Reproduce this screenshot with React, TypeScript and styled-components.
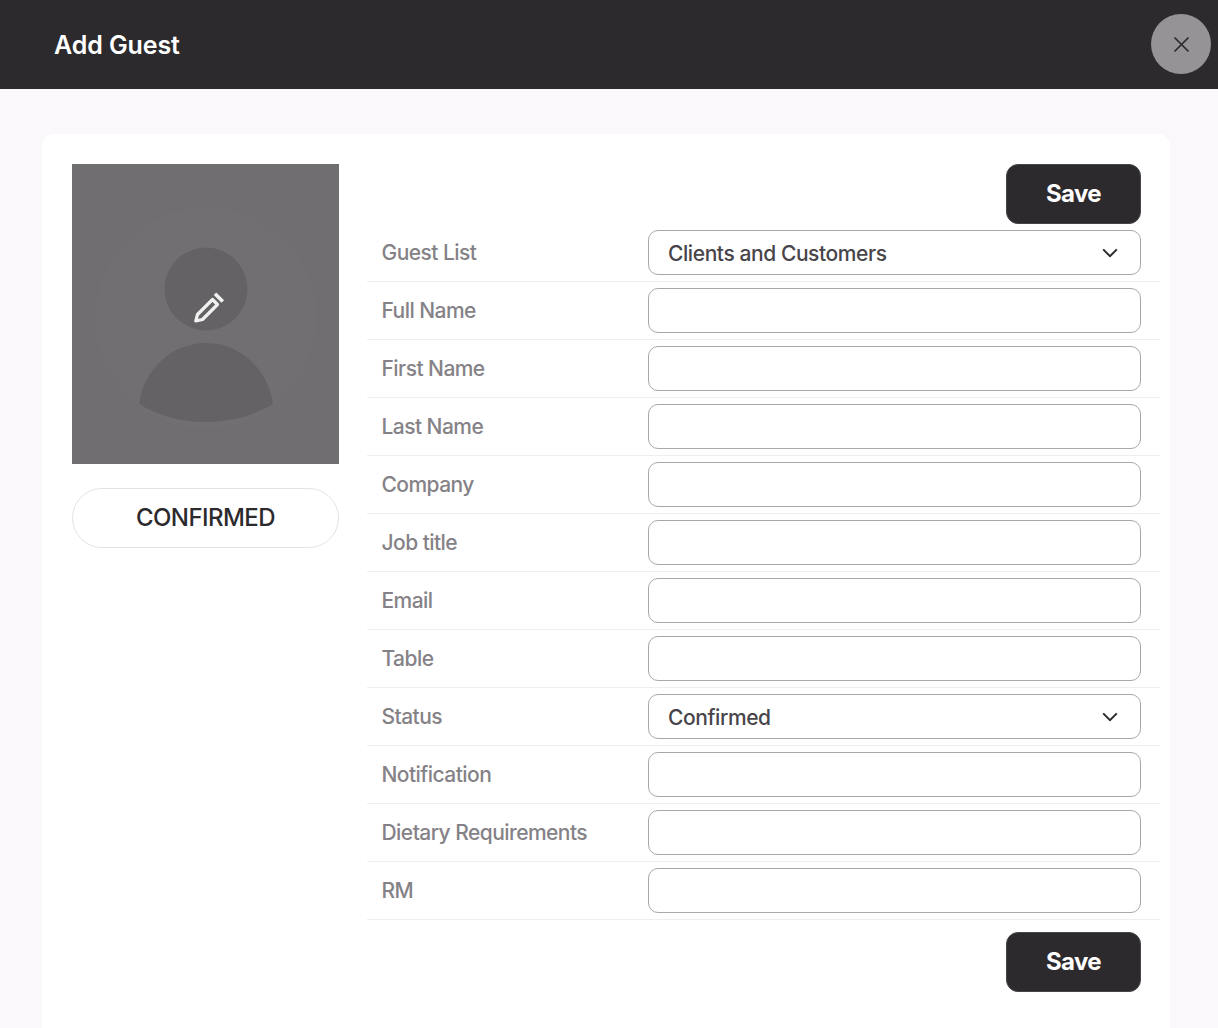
import React from 'react';
import styled, { createGlobalStyle } from 'styled-components';

const GlobalStyle = createGlobalStyle`
  html, body {
    margin: 0;
    height: 100%;
    overflow: hidden;
    background: #fbf8fc;
  }
  * {
    box-sizing: border-box;
  }
  body {
    font-family: Inter, 'Liberation Sans', sans-serif;
  }
`;

const fields = [
  { label: 'Guest List', value: 'Clients and Customers' },
  { label: 'Full Name' },
  { label: 'First Name' },
  { label: 'Last Name' },
  { label: 'Company' },
  { label: 'Job title' },
  { label: 'Email' },
  { label: 'Table' },
  { label: 'Status', value: 'Confirmed' },
  { label: 'Notification' },
  { label: 'Dietary Requirements' },
  { label: 'RM' },
];

const Chevron = () => (
  <ChevronIcon width="16" height="10" viewBox="0 0 16 10" fill="none">
    <path d="M1.200 1.400 8 8.200l6.800-6.800" stroke="#2d2a2e" strokeWidth="2" />
  </ChevronIcon>
);

const Avatar = () => (
  <AvatarSvg viewBox="0 0 267 300">
    <rect width="267" height="300" fill="#706e71" />
    <circle cx="134" cy="154" r="111" fill="#716f72" />
    <circle cx="134" cy="125" r="41.500" fill="#646265" />
    <path d="M67 240C72 205 100 179 134 179s62 26 67 61c-20 12-42 18-67 18s-47-6-67-18Z" fill="#646265" />
    <g fill="none" stroke="#f1f1f1" strokeLinejoin="round">
      <path d="M140.500 135.500 125.500 150.500 123.800 157 130.500 155.500 145.500 140.500Z" strokeWidth="3.200" />
      <path d="M143 129.800 150.800 137.600" strokeWidth="3.600" />
    </g>
  </AvatarSvg>
);

export default function App() {
  return (
    <>
      <GlobalStyle />
      <Header>
        <Title>Add Guest</Title>
        <CloseButton aria-label="Close">
          <svg width="16" height="16" viewBox="0 0 16 16" fill="none" overflow="visible">
            <path d="M1.500 1.500l14 14M15.500 1.500l-14 14" stroke="#2d2a2e" strokeWidth="1.700" />
          </svg>
        </CloseButton>
      </Header>
      <Main>
        <Card>
          <Side>
            <Avatar />
            <StatusPill>CONFIRMED</StatusPill>
          </Side>
          <FormArea>
            <SaveRow>
              <SaveButton>Save</SaveButton>
            </SaveRow>
            {fields.map((f) => (
              <Row key={f.label}>
                <Label>{f.label}</Label>
                <Field>
                  <FieldText>{f.value}</FieldText>
                  {f.value && <Chevron />}
                </Field>
              </Row>
            ))}
            <SaveRow $bottom>
              <SaveButton>Save</SaveButton>
            </SaveRow>
          </FormArea>
        </Card>
      </Main>
    </>
  );
}

const Header = styled.header`
  position: relative;
  height: 89px;
  background: #2d2a2e;
  display: flex;
  align-items: center;
  padding: 0 0 0 54px;
`;

const Title = styled.h1`
  margin: 0;
  font-size: 25px;
  font-weight: 600;
  letter-spacing: -0.1px;
  color: #fff;
`;

const CloseButton = styled.button`
  position: absolute;
  top: 14px;
  right: 7px;
  width: 60px;
  height: 60px;
  padding: 0;
  border: 0;
  border-radius: 50%;
  background: #959396;
  display: flex;
  align-items: center;
  justify-content: center;
`;

const Main = styled.main`
  padding: 45px 48px 0 42px;
`;

const Card = styled.section`
  display: flex;
  gap: 28px;
  height: calc(100vh - 134px);
  padding: 30px 10px 0 30px;
  background: #fff;
  border-radius: 12px 12px 0 0;
`;

const Side = styled.div`
  width: 267px;
  flex: none;
  display: flex;
  flex-direction: column;
  gap: 24px;
`;

const AvatarSvg = styled.svg`
  display: block;
  width: 267px;
  height: 300px;
`;

const StatusPill = styled.div`
  height: 60px;
  padding-bottom: 2px;
  border: 1px solid #e4e2e6;
  border-radius: 30px;
  display: flex;
  align-items: center;
  justify-content: center;
  font-size: 24px;
  font-weight: 550;
  letter-spacing: -0.55px;
  color: #2d2a2e;
`;

const FormArea = styled.div`
  flex: 1;
  min-width: 0;
`;

const SaveRow = styled.div<{ $bottom?: boolean }>`
  display: flex;
  justify-content: flex-end;
  padding-right: 19px;
  margin-top: ${(p) => (p.$bottom ? '12px' : '0')};
`;

const SaveButton = styled.button`
  width: 135px;
  height: 60px;
  padding: 0 0 2px;
  border: 1px solid #48454a;
  border-radius: 12px;
  background: #2d2a2e;
  color: #fff;
  font-family: inherit;
  font-size: 24px;
  font-weight: 650;
  letter-spacing: -0.6px;
`;

const Row = styled.div`
  display: flex;
  align-items: center;
  height: 58px;
  padding: 0 19px 1px 14.500px;
  border-bottom: 1px solid #f0eef1;
`;

const Label = styled.div`
  width: 266.500px;
  flex: none;
  padding-top: 1px;
  font-size: 21px;
  font-weight: 450;
  letter-spacing: -0.55px;
  color: #858287;
`;

const Field = styled.div`
  flex: 1;
  height: 45px;
  padding: 0 22px 0 19px;
  border: 1px solid #a9a7aa;
  border-radius: 10px;
  display: flex;
  align-items: center;
  justify-content: space-between;
`;

const FieldText = styled.span`
  padding-top: 2px;
  font-size: 21px;
  font-weight: 550;
  letter-spacing: -0.42px;
  color: #48454a;
`;

const ChevronIcon = styled.svg`
  margin-top: 1px;
`;
